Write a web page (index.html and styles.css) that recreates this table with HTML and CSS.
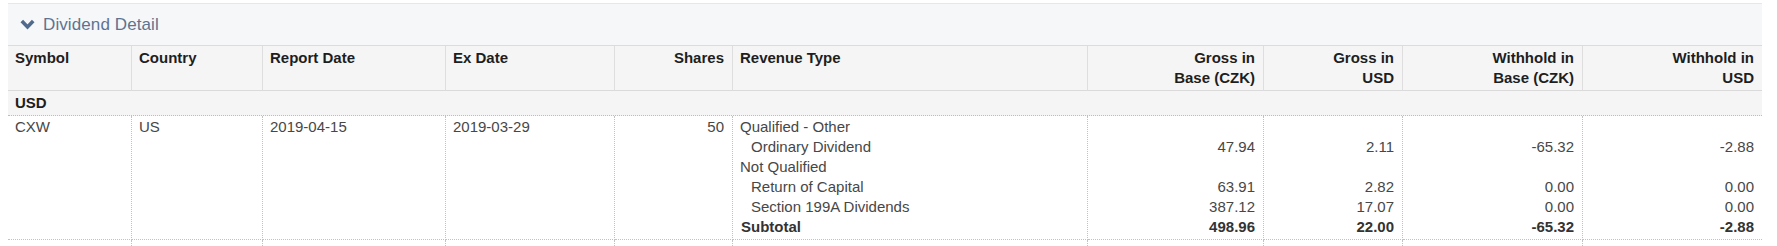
FILE: index.html
```html
<!DOCTYPE html>
<html>
<head>
<meta charset="utf-8">
<link rel="stylesheet" href="styles.css">
</head>
<body>
<div class="panel">
  <div class="panel-head">
    <svg class="chev" viewBox="0 0 15 11" width="15" height="11"><polyline points="1.8,2 7.5,7.9 13.2,2" fill="none" stroke="#4f6a8d" stroke-width="3.6"/></svg>
    <span class="title">Dividend Detail</span>
  </div>
  <table class="grid">
    <colgroup>
      <col class="w-sym"><col class="w-cty"><col class="w-rep"><col class="w-ex"><col class="w-sh"><col class="w-rev"><col class="w-gb"><col class="w-gu"><col class="w-wb"><col class="w-wu">
    </colgroup>
    <thead>
      <tr>
        <th>Symbol</th>
        <th>Country</th>
        <th>Report Date</th>
        <th>Ex Date</th>
        <th class="num">Shares</th>
        <th>Revenue Type</th>
        <th class="num">Gross in<br>Base (CZK)</th>
        <th class="num">Gross in<br>USD</th>
        <th class="num">Withhold in<br>Base (CZK)</th>
        <th class="num last">Withhold in<br>USD</th>
      </tr>
    </thead>
    <tbody>
      <tr class="group"><td colspan="10">USD</td></tr>
      <tr class="data">
        <td>CXW</td>
        <td>US</td>
        <td>2019-04-15</td>
        <td>2019-03-29</td>
        <td class="num">50</td>
        <td>
          <div class="ln">Qualified - Other</div>
          <div class="ln sub">Ordinary Dividend</div>
          <div class="ln">Not Qualified</div>
          <div class="ln sub">Return of Capital</div>
          <div class="ln sub">Section 199A Dividends</div>
          <div class="ln tot">Subtotal</div>
        </td>
        <td class="num">
          <div class="ln">&nbsp;</div>
          <div class="ln">47.94</div>
          <div class="ln">&nbsp;</div>
          <div class="ln">63.91</div>
          <div class="ln">387.12</div>
          <div class="ln tot">498.96</div>
        </td>
        <td class="num">
          <div class="ln">&nbsp;</div>
          <div class="ln">2.11</div>
          <div class="ln">&nbsp;</div>
          <div class="ln">2.82</div>
          <div class="ln">17.07</div>
          <div class="ln tot">22.00</div>
        </td>
        <td class="num">
          <div class="ln">&nbsp;</div>
          <div class="ln">-65.32</div>
          <div class="ln">&nbsp;</div>
          <div class="ln">0.00</div>
          <div class="ln">0.00</div>
          <div class="ln tot">-65.32</div>
        </td>
        <td class="num last">
          <div class="ln">&nbsp;</div>
          <div class="ln">-2.88</div>
          <div class="ln">&nbsp;</div>
          <div class="ln">0.00</div>
          <div class="ln">0.00</div>
          <div class="ln tot">-2.88</div>
        </td>
      </tr>
      <tr class="data">
        <td>&nbsp;</td><td>&nbsp;</td><td>&nbsp;</td><td>&nbsp;</td><td>&nbsp;</td><td>&nbsp;</td><td>&nbsp;</td><td>&nbsp;</td><td>&nbsp;</td><td class="last">&nbsp;</td>
      </tr>
    </tbody>
  </table>
</div>
</body>
</html>
```
FILE: styles.css
```css
html, body {
  margin: 0;
  padding: 0;
  background: #fff;
}
body {
  padding: 3px 15px 0 8px;
  font-family: "Liberation Sans", Arial, sans-serif;
  overflow: hidden;
}
.panel {
  width: 1754px;
}
.panel-head {
  display: flex;
  align-items: center;
  height: 41px;
  padding-left: 12px;
  background: #f6f7f8;
  border-top: 1px solid #e6e7e9;
  border-bottom: 1px solid #dcdcdc;
}
.chev {
  display: block;
  margin-right: 8px;
  margin-top: 0;
}
.title {
  font-size: 17px;
  color: #5d7392;
  letter-spacing: 0.1px;
}
.grid {
  width: 1754px;
  table-layout: fixed;
  border-collapse: separate;
  border-spacing: 0;
  font-size: 15px;
}
.w-sym { width: 124px; }
.w-cty { width: 131px; }
.w-rep { width: 183px; }
.w-ex { width: 169px; }
.w-sh { width: 118px; }
.w-rev { width: 355px; }
.w-gb { width: 176px; }
.w-gu { width: 139px; }
.w-wb { width: 180px; }
.w-wu { width: 179px; }
.grid th {
  background: #f5f5f5;
  color: #1e1e1e;
  font-weight: bold;
  text-align: left;
  vertical-align: top;
  line-height: 20px;
  padding: 2px 7px 2px 7px;
  border-right: 1px solid #dedede;
  border-bottom: 1px solid #dadada;
}
.grid th.last, .grid td.last {
  border-right: none;
}
.grid .num {
  text-align: right;
  padding-right: 8px;
}
.group td {
  background: #f5f5f5;
  font-weight: bold;
  color: #1e1e1e;
  line-height: 20px;
  padding: 2px 7px 2px 7px;
  border-bottom: 1px dotted #bdbdbd;
}
.data td {
  vertical-align: top;
  color: #474747;
  line-height: 20px;
  padding: 1px 8px 2px 7px;
  border-right: 1px dotted #c2c2c2;
  border-bottom: 1px dotted #c2c2c2;
}
.ln.sub {
  padding-left: 11px;
}
.ln.tot {
  font-weight: bold;
  color: #333;
}
td:not(.num) > .ln.tot {
  padding-left: 1px;
}
```
